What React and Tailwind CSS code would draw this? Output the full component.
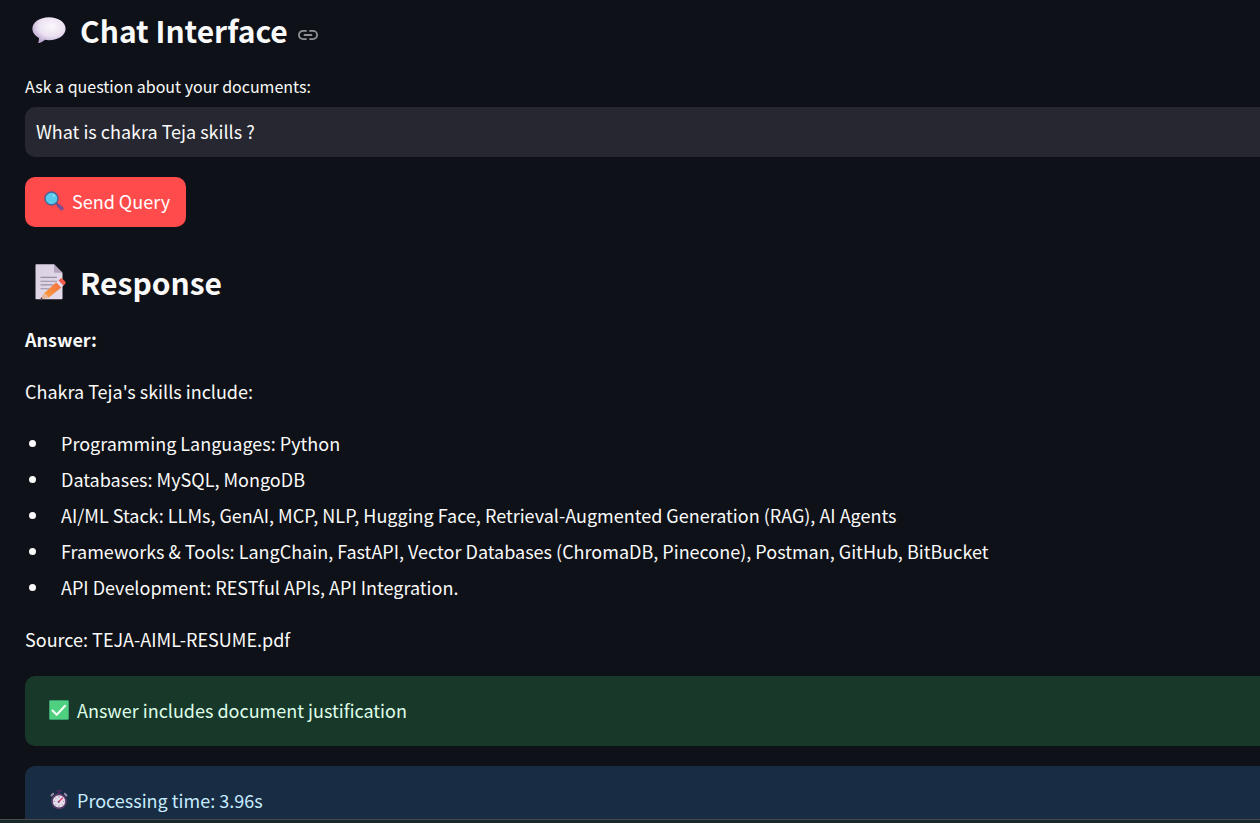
import React from "react";

const skills = [
  "Programming Languages: Python",
  "Databases: MySQL, MongoDB",
  "AI/ML Stack: LLMs, GenAI, MCP, NLP, Hugging Face, Retrieval-Augmented Generation (RAG), AI Agents",
  "Frameworks & Tools: LangChain, FastAPI, Vector Databases (ChromaDB, Pinecone), Postman, GitHub, BitBucket",
  "API Development: RESTful APIs, API Integration.",
];

function SpeechBubble() {
  return (
    <svg aria-hidden="true" viewBox="0 0 34 27" className="h-[27px] w-[34px] shrink-0">
      <defs>
        <radialGradient id="bubble" cx="0.58" cy="0.35" r="0.65">
          <stop offset="0" stopColor="#fbf8fd" />
          <stop offset="0.6" stopColor="#ebe1f1" />
          <stop offset="1" stopColor="#b9a7d1" />
        </radialGradient>
      </defs>
      <path
        d="M17 .3C26.4.3 33.6 5.300 33.600 11.800S26.400 23.200 17 23.200c-1.400 0-2.800-.1-4.100-.4-1.500 1.500-3.600 2.900-5.900 3.300-.7.100-.9-.5-.6-1 .6-1.300.7-3 .4-4.300C2.900 18.700.4 15.500.4 11.800.4 5.300 7.600.3 17 .3Z"
        fill="url(#bubble)"
      />
    </svg>
  );
}

function Memo() {
  return (
    <svg aria-hidden="true" viewBox="0 0 31 36" className="h-[36px] w-[31px] shrink-0">
      <defs>
        <linearGradient id="paper" x1="0" y1="0" x2="1" y2="1">
          <stop offset="0" stopColor="#d8cfe0" />
          <stop offset="1" stopColor="#e6dced" />
        </linearGradient>
        <linearGradient id="pencil" x1="0" y1="1" x2="1" y2="0">
          <stop offset="0" stopColor="#f9a13f" />
          <stop offset="1" stopColor="#f36c3e" />
        </linearGradient>
      </defs>
      <path d="M1.500.2H19l8.500 8.500v25.500c0 .7-.4 1-1 1h-25c-.7 0-1-.3-1-1v-33c0-.7.300-1 1-1Z" fill="url(#paper)" />
      <path d="M19 .2v7.500c0 .7.300 1 1 1h7.500Z" fill="#b3a4c0" />
      <path d="M5.500 13.400H22M5.500 17.200H22M5.500 20.900H18M5.500 24.700H14" stroke="#998fa3" strokeWidth="1.100" />
      <path d="m8.800 29.400 4.300 4.500-6.800 1.300c-.6.100-.9-.3-.7-.8Z" fill="#e7b594" />
      <path d="m6.300 33.200 1.400 1.500-1.600.5c-.5 0-.7-.3-.5-.7Z" fill="#4d3150" />
      <path d="m8.800 29.400 12.500-11.100 5.100 5.100-13.300 10.500c-.8-2-2.200-3.600-4.300-4.500Z" fill="url(#pencil)" />
      <path d="m21.300 18.300 2.200-1.900 5.100 5.100-2.200 1.900Z" fill="#e4dceb" />
      <path d="m23.500 16.400 1.600-1.500c.8-.8 1.700-.8 2.500 0l2.600 2.700c.7.800.7 1.600-.1 2.400l-1.500 1.500Z" fill="#f35b4c" />
    </svg>
  );
}

function Magnifier() {
  return (
    <svg aria-hidden="true" viewBox="0 0 20 20" className="size-5 shrink-0">
      <path d="m11.600 11.600 2.800 2.800" stroke="#564e84" strokeWidth="1.800" />
      <path d="m14.800 14.800 2.900 2.700" stroke="#7b4d91" strokeWidth="3.800" strokeLinecap="round" />
      <circle cx="7.500" cy="7.500" r="6.500" fill="#5bcbed" stroke="#43639b" strokeWidth="1.400" />
      <circle cx="9.800" cy="4.500" r="1" fill="#a5e9f7" />
    </svg>
  );
}

function CheckMark() {
  return (
    <svg aria-hidden="true" viewBox="0 0 20 20" className="size-5 shrink-0">
      <rect x=".4" y=".4" width="19.200" height="19.200" rx="1" fill="#4fd080" stroke="#3ca878" strokeWidth=".8" />
      <path d="m3.500 10.500 4.200 4.300 8.400-9" fill="none" stroke="#f7fff9" strokeWidth="2" strokeLinecap="round" strokeLinejoin="round" />
    </svg>
  );
}

function Stopwatch() {
  return (
    <svg aria-hidden="true" viewBox="0 0 20 20" className="size-5 shrink-0">
      <path d="M7.500.8h5M10 1v4" stroke="#49295f" strokeWidth="2" />
      <path d="m2.500 5.500 1.700-1.700M17.500 5.500l-1.700-1.700" stroke="#998ba8" strokeWidth="2" strokeLinecap="round" />
      <circle cx="10" cy="11.400" r="7" fill="#e5ddea" stroke="#593b6b" strokeWidth="1.600" />
      <path d="M10 6v1.500M10 15.300v1.500M4.600 11.400h1.500M13.900 11.400h1.500M6.200 7.600l1 1M13.800 15.200l-1-1M6.200 15.200l1-1" stroke="#9f91a9" />
      <path d="m9.500 11.900 4-4" stroke="#dc3f70" strokeWidth="1.400" strokeLinecap="round" />
      <circle cx="9.700" cy="11.700" r="1" fill="#6a4570" />
    </svg>
  );
}

function LinkIcon() {
  return (
    <svg aria-hidden="true" viewBox="0 0 20 10" className="h-[10px] w-[20px]" fill="none" stroke="currentColor" strokeWidth="1.800" strokeLinecap="round">
      <path d="M8 .9H5a4.100 4.100 0 0 0 0 8.200h3M12 .9h3a4.100 4.100 0 0 1 0 8.200h-3M6.500 5h7" />
    </svg>
  );
}

export default function App() {
  return (
    <div className="flex h-screen flex-col overflow-hidden bg-[#0e1117] font-['Noto_Sans_CJK_SC',sans-serif] text-lg text-[#fafafa]">
      <main className="min-h-0 flex-1 overflow-hidden pl-[25px]">
        <h2 className="flex h-[62px] items-center gap-3.5 pb-0.5 pl-[7px] text-3xl font-bold">
          <SpeechBubble />
          <span className="flex items-center gap-2.5">
            Chat Interface
            <a href="#chat-interface" aria-label="Link to Chat Interface" className="pt-2.5 text-[#8f9197]">
              <LinkIcon />
            </a>
          </span>
        </h2>

        <form onSubmit={(event) => event.preventDefault()}>
          <label htmlFor="question" className="mt-3 block text-base leading-6">
            Ask a question about your documents:
          </label>
          <input
            id="question"
            type="text"
            defaultValue="What is chakra Teja skills ?"
            className="mt-[9px] block h-[50px] w-full rounded-l-[10px] bg-[#262730] px-[11px] pb-0.5 outline-none"
          />
          <button type="submit" className="mt-5 flex h-[50px] items-center gap-2 rounded-[10px] bg-[#ff4b4b] pr-4 pb-0.5 pl-[19px] text-white">
            <Magnifier />
            Send Query
          </button>
        </form>

        <h2 className="mt-6 flex h-16 items-center gap-3.5 pb-0.5 pl-2.5 text-3xl font-bold">
          <Memo />
          Response
        </h2>

        <p className="mt-2 leading-8 font-bold">Answer:</p>
        <p className="mt-5 leading-8">Chakra Teja's skills include:</p>
        <ul className="mt-[18px] list-none">
          {skills.map((skill) => (
            <li key={skill} className="flex items-center gap-[25px] pl-1 leading-9">
              <span aria-hidden="true" className="size-[7px] shrink-0 rounded-full bg-[#fafafa]" />
              {skill}
            </li>
          ))}
        </ul>
        <p className="mt-[18px] leading-8">Source: TEJA-AIML-RESUME.pdf</p>

        <div role="status" className="mt-[21px] flex h-[70px] items-center gap-2 rounded-l-[10px] bg-[#183929] px-6 pb-0.5 text-[#dffde9]">
          <CheckMark />
          Answer includes document justification
        </div>
        <div role="status" className="mt-5 flex h-[70px] items-center gap-2 rounded-l-[10px] bg-[#182d43] px-6 pb-0.5 text-[#c7ebff]">
          <Stopwatch />
          Processing time: 3.96s
        </div>
      </main>
      <footer className="h-1 shrink-0 border-t border-[#484b4c] bg-[#19282c]" />
    </div>
  );
}
